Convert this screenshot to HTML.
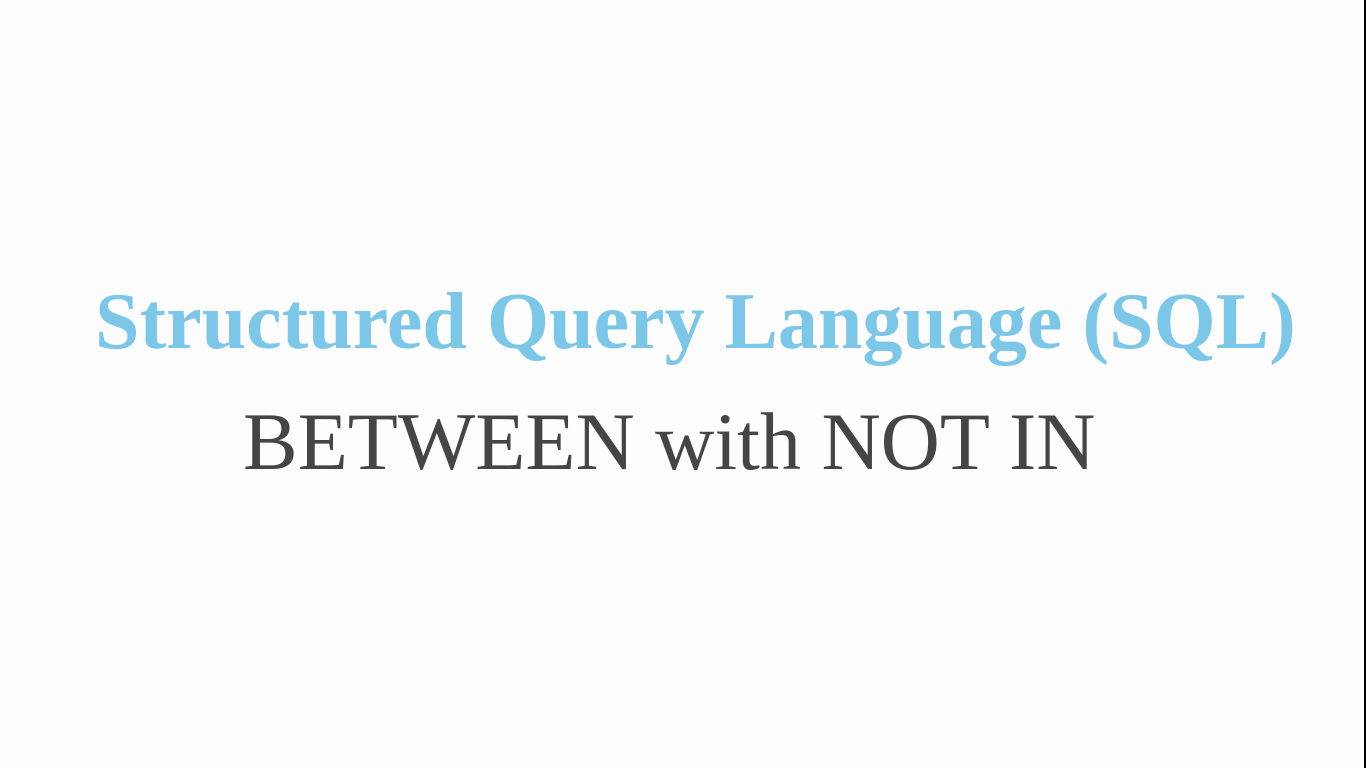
<!DOCTYPE html>
<html><head><meta charset="utf-8"><style>
html,body{margin:0;padding:0;width:1366px;height:768px;overflow:hidden;background:#fdfdfd;position:relative;font-family:"Liberation Serif",serif}
.t{position:absolute;left:95px;top:322px;font-size:80px;font-weight:bold;color:#7cc6e8;white-space:nowrap;line-height:0}
.s{position:absolute;left:243px;top:442px;font-size:82px;color:#454545;white-space:nowrap;line-height:0}
.bar{position:absolute;right:0;top:0;width:2px;height:768px;background:#000}
</style></head><body>
<div class="t">Structured Query Language (SQL)</div>
<div class="s">BETWEEN with NOT IN</div>
<div class="bar"></div>
</body></html>
